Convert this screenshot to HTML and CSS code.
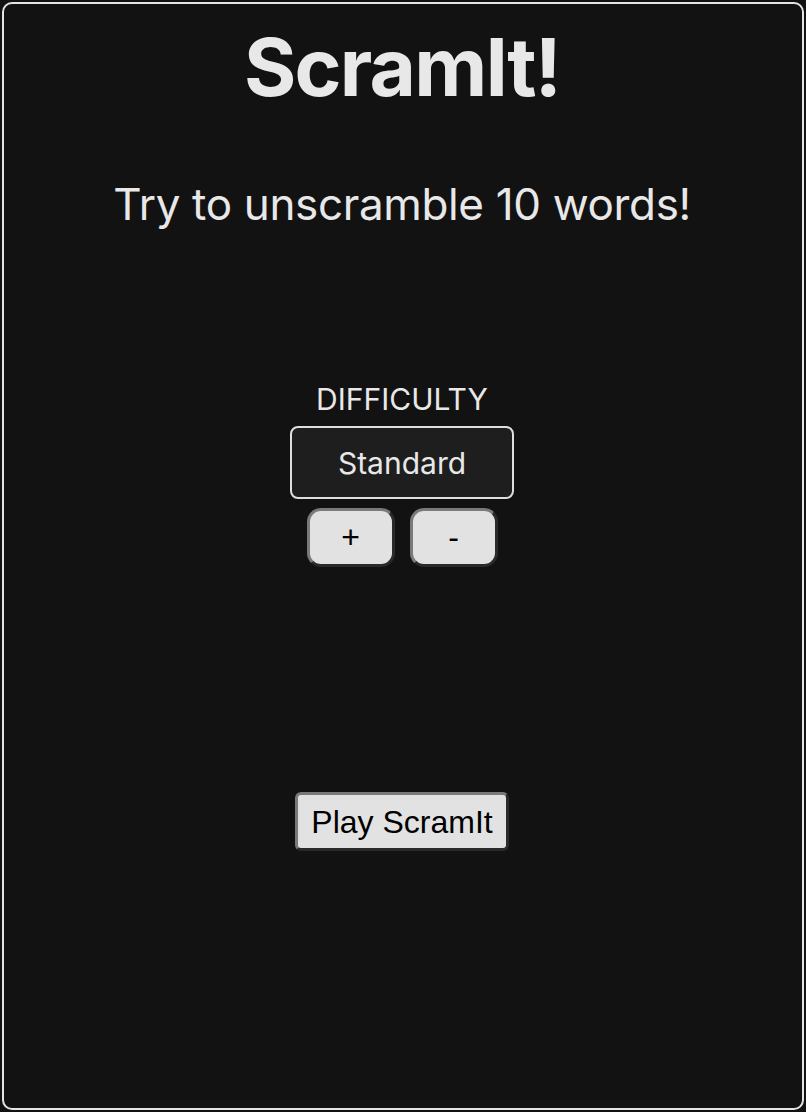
FILE: index.html
```html
<!DOCTYPE html>
<html lang="en">
<head>
<meta charset="utf-8">
<title>ScramIt!</title>
<link rel="stylesheet" href="styles.css">
</head>
<body>
<main class="frame">
  <h1 class="title">ScramIt!</h1>
  <p class="subtitle">Try to unscramble 10 words!</p>
  <section class="difficulty">
    <div class="difficulty-label">DIFFICULTY</div>
    <div class="difficulty-value">Standard</div>
    <div class="difficulty-controls">
      <button class="btn btn-step" type="button">+</button>
      <button class="btn btn-step" type="button">-</button>
    </div>
  </section>
  <button class="btn btn-play" type="button">Play ScramIt</button>
</main>
</body>
</html>
```

FILE: styles.css
```css
html, body {
  background: #121212;
}
body {
  margin: 2px;
  font-family: Inter, "Noto Sans", sans-serif;
  color: #e8e8e8;
}
.frame {
  box-sizing: border-box;
  height: 1108px;
  border: 2px solid #e4e4e4;
  border-radius: 10px;
  background: #121212;
  padding-right: 2px;
  display: flex;
  flex-direction: column;
  align-items: center;
}
.title {
  margin: 15px 0 0;
  font-size: 80px;
  line-height: 96px;
  font-weight: 700;
  letter-spacing: -1.8px;
}
.subtitle {
  margin: 63px 0 0;
  font-size: 44px;
  line-height: 53px;
  font-weight: 400;
  letter-spacing: -0.35px;
}
.difficulty {
  margin-top: 150px;
  display: flex;
  flex-direction: column;
  align-items: center;
}
.difficulty-label {
  font-size: 30px;
  line-height: 36px;
}
.difficulty-value {
  box-sizing: border-box;
  margin-top: 9px;
  width: 224px;
  height: 73px;
  border: 2px solid #dedede;
  border-radius: 8px;
  background: #1e1e1e;
  font-size: 30px;
  display: flex;
  align-items: center;
  justify-content: center;
}
.difficulty-controls {
  margin-top: 9px;
  display: flex;
  gap: 15px;
}
.btn {
  box-sizing: border-box;
  font-family: "Liberation Sans", Arial, sans-serif;
  font-size: 32px;
  color: #000;
  background: #e2e2e2;
  border-style: solid;
  border-width: 3px;
  border-color: #7a7a7a #2a2a2a #2a2a2a #7a7a7a;
  cursor: pointer;
}
.btn-step {
  width: 88px;
  height: 59px;
  padding: 0;
  border-radius: 14px;
}
.btn-play {
  margin-top: 225px;
  height: 59px;
  padding: 0 13px;
  border-radius: 6px;
  line-height: 1;
}
```
